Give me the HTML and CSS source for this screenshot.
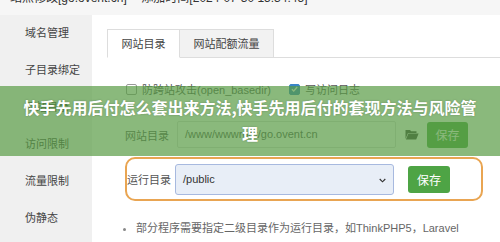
FILE: index.html
```html
<!DOCTYPE html>
<html lang="zh-CN">
<head>
<meta charset="utf-8">
<title>站点修改</title>
<link rel="stylesheet" href="styles.css">
</head>
<body>
<div class="page">
  <div class="topbar"><span class="top-title">站点修改[go.ovent.cn] -- 添加时间[2024-07-30 15:34:45]</span></div>
  <div class="layout">
    <nav class="sidebar">
      <div class="nav-item">域名管理</div>
      <div class="nav-item">子目录绑定</div>
      <div class="nav-item">网站目录</div>
      <div class="nav-item">访问限制</div>
      <div class="nav-item">流量限制</div>
      <div class="nav-item">伪静态</div>
    </nav>
    <main class="main">
      <div class="tabs">
        <div class="tab tab-active">网站目录</div>
        <div class="tab">网站配额流量</div>
      </div>
      <div class="form">
        <div class="check-row">
          <label class="check"><span class="box"></span>防跨站攻击(open_basedir)</label>
          <label class="check"><span class="box box-on"><svg viewBox="0 0 12 12" width="10" height="10"><path d="M2.5 6.2 L5 8.6 L9.6 3.4" fill="none" stroke="#fff" stroke-width="1.8"/></svg></span>写访问日志</label>
        </div>
        <div class="field-row">
          <span class="label">网站目录</span>
          <div class="input">/www/wwwroot/go.ovent.cn</div>
          <svg class="folder" viewBox="0 0 14 11" width="14" height="11"><path d="M0.5 1 H5 L6.2 2.3 H11.5 V4 H3 L0.5 10 Z" fill="#3d3d3d"/><path d="M3.4 4.6 H13.6 L11.2 10.4 H0.9 Z" fill="#3d3d3d"/></svg>
          <button class="btn btn-a">保存</button>
        </div>
        <div class="field-row run-row">
          <span class="label label-run">运行目录</span>
          <div class="select">/public<svg class="chev" viewBox="0 0 8 5" width="7" height="5"><path d="M0.8 0.8 L4 4 L7.2 0.8" fill="none" stroke="#333" stroke-width="1.3"/></svg></div>
          <button class="btn btn-b">保存</button>
        </div>
        <ul class="tips">
          <li>部分程序需要指定二级目录作为运行目录，如ThinkPHP5，Laravel</li>
        </ul>
      </div>
    </main>
  </div>
  <div class="banner">快手先用后付怎么套出来方法,快手先用后付的套现方法与风险管理</div>
</div>
</body>
</html>
```
FILE: styles.css
```css
* { box-sizing: border-box; }
html, body { margin: 0; padding: 0; }
body {
  width: 500px;
  height: 242px;
  overflow: hidden;
  background: #fff;
  font-family: "Liberation Sans", "Noto Sans CJK SC", sans-serif;
  color: #555;
}
.page { position: relative; width: 500px; height: 242px; overflow: hidden; }

.topbar {
  height: 15px;
  background: #f6f6f6;
  overflow: hidden;
  padding-left: 10px;
}
.top-title {
  display: block;
  margin-top: -9px;
  font-size: 12px;
  line-height: 14px;
  color: #333;
  white-space: nowrap;
}

.layout { display: flex; height: 227px; }

.sidebar {
  width: 92px;
  flex: none;
  background: #f0f0f0;
}
.nav-item {
  height: 37px;
  line-height: 37px;
  padding-left: 25px;
  font-size: 11px;
  color: #444;
}

.main { flex: 1; background: #fff; }

.tabs {
  display: flex;
  margin: 14px 0 0 15px;
  height: 29px;
  border-bottom: 1px solid #ddd;
}
.tab {
  height: 29px;
  line-height: 28px;
  font-size: 11px;
  color: #444;
  text-align: center;
  border: 1px solid #ddd;
  background: #f2f2f2;
}
.tab-active {
  width: 73px;
  background: #fff;
  border-bottom-color: #fff;
}
.tab:not(.tab-active) { width: 94px; border-left: none; }

.form { padding-left: 33px; }

.check-row {
  display: flex;
  align-items: center;
  height: 20px;
  margin-top: 21px;
  gap: 18px;
  padding-left: 1px;
}
.check {
  display: flex;
  align-items: center;
  font-size: 11px;
  color: #555;
}
.box {
  width: 11px;
  height: 11px;
  border: 1px solid #999;
  border-radius: 2px;
  background: #fff;
  margin-right: 5px;
  display: flex;
  align-items: center;
  justify-content: center;
}
.box-on { background: #3a86c8; border-color: #3a86c8; }

.field-row {
  display: flex;
  align-items: center;
  margin-top: 22px;
  height: 27px;
}
.label { width: 52px; font-size: 11px; color: #555; flex: none; }
.input {
  width: 219px;
  height: 27px;
  border: 1px solid #ddd;
  border-radius: 2px;
  font-size: 11px;
  line-height: 25px;
  padding-left: 7px;
  color: #555;
}
.folder { margin-left: 9px; }
.btn {
  font-family: "Noto Sans CJK SC", sans-serif;
  border: none;
  border-radius: 3px;
  background: #4ea445;
  color: #fff;
  font-size: 12px;
  padding: 0;
}
.btn-a { width: 41px; height: 26px; margin-left: 8px; }

.run-row {
  margin-top: 9px;
  height: 44px;
  width: 358px;
  border: 2px solid #e9a552;
  border-radius: 10px;
}
.label-run { width: 48px; }
.select {
  position: relative;
  width: 219px;
  height: 31px;
  background: #e8eef7;
  border: 1px solid #a7b9df;
  border-radius: 3px;
  font-size: 11px;
  line-height: 29px;
  padding-left: 7px;
  color: #333;
}
.chev { position: absolute; right: 7px; top: 13px; }
.btn-b { width: 42px; height: 27px; margin-left: 14px; }

.tips {
  margin: 19px 0 0 0;
  padding: 0 0 0 11px;
  font-size: 11px;
  line-height: 16px;
  color: #666;
}
.tips li::marker { color: #888; }

.banner {
  position: absolute;
  left: 0;
  top: 86px;
  width: 500px;
  height: 70px;
  padding: 8px 20px 0;
  background: rgba(88, 155, 68, 0.7);
  color: #fff;
  font-family: "Noto Sans CJK SC", sans-serif;
  font-weight: 700;
  font-size: 16px;
  line-height: 26px;
  text-align: center;
  text-shadow: 0 0 2px rgba(0, 0, 0, 0.25);
}
```
